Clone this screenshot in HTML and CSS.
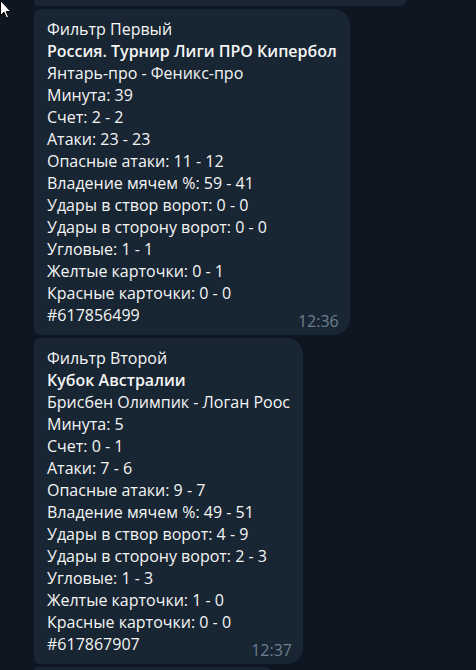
FILE: index.html
```html
<!DOCTYPE html>
<html lang="ru">
<head>
    <meta charset="UTF-8">
    <meta name="viewport" content="width=device-width, initial-scale=1.0">
    <title>Чат</title>
    <link rel="stylesheet" href="styles.css">
</head>
<body>
    <svg class="cursor" width="12" height="19" viewBox="0 0 12 19">
        <path d="M0.5 0.5 L0.5 15.5 L4 12.2 L6.6 18 L8.6 17.1 L6.1 11.5 L10.8 11.5 Z" fill="#fff" stroke="#000" stroke-width="1"/>
    </svg>
    <div class="chat">
        <div class="bubble bubble-prev"></div>

        <div class="bubble">
            <div class="line">Фильтр Первый</div>
            <div class="line title">Россия. Турнир Лиги ПРО Кипербол</div>
            <div class="line">Янтарь-про - Феникс-про</div>
            <div class="line">Минута: 39</div>
            <div class="line">Счет: 2 - 2</div>
            <div class="line">Атаки: 23 - 23</div>
            <div class="line">Опасные атаки: 11 - 12</div>
            <div class="line">Владение мячем %: 59 - 41</div>
            <div class="line">Удары в створ ворот: 0 - 0</div>
            <div class="line">Удары в сторону ворот: 0 - 0</div>
            <div class="line">Угловые: 1 - 1</div>
            <div class="line">Желтые карточки: 0 - 1</div>
            <div class="line">Красные карточки: 0 - 0</div>
            <div class="meta">
                <span class="line">#617856499</span>
                <span class="time">12:36</span>
            </div>
        </div>

        <div class="bubble">
            <div class="line">Фильтр Второй</div>
            <div class="line title">Кубок Австралии</div>
            <div class="line">Брисбен Олимпик - Логан Роос</div>
            <div class="line">Минута: 5</div>
            <div class="line">Счет: 0 - 1</div>
            <div class="line">Атаки: 7 - 6</div>
            <div class="line">Опасные атаки: 9 - 7</div>
            <div class="line">Владение мячем %: 49 - 51</div>
            <div class="line">Удары в створ ворот: 4 - 9</div>
            <div class="line">Удары в сторону ворот: 2 - 3</div>
            <div class="line">Угловые: 1 - 3</div>
            <div class="line">Желтые карточки: 1 - 0</div>
            <div class="line">Красные карточки: 0 - 0</div>
            <div class="meta">
                <span class="line">#617867907</span>
                <span class="time">12:37</span>
            </div>
        </div>

        <div class="bubble bubble-next"></div>
    </div>
</body>
</html>
```

FILE: styles.css
```css
body {
    margin: 0;
    height: 670px;
    overflow: hidden;
    background-color: #0e1621;
    font-family: "Open Sans", sans-serif;
    font-size: 16px;
    color: #f5f5f5;
}
.cursor {
    position: absolute;
    left: 0;
    top: 0;
}
.chat {
    display: flex;
    flex-direction: column;
    align-items: flex-start;
    gap: 3px;
    padding-left: 34px;
    margin-top: -9px;
}
.bubble {
    background-color: #182533;
    border-radius: 6px 16px 16px 6px;
    padding: 9px 13px 6px 13px;
}
.bubble-prev {
    width: 373px;
    height: 15px;
    padding: 0;
}
.bubble-next {
    width: 240px;
    height: 20px;
    padding: 0;
}
.line {
    line-height: 22px;
    white-space: nowrap;
}
.title {
    font-weight: 600;
}
.meta {
    display: flex;
    justify-content: space-between;
    gap: 20px;
}
.time {
    color: #6d7f8f;
    line-height: 16px;
    padding-top: 9px;
    margin-right: -2px;
}
```
